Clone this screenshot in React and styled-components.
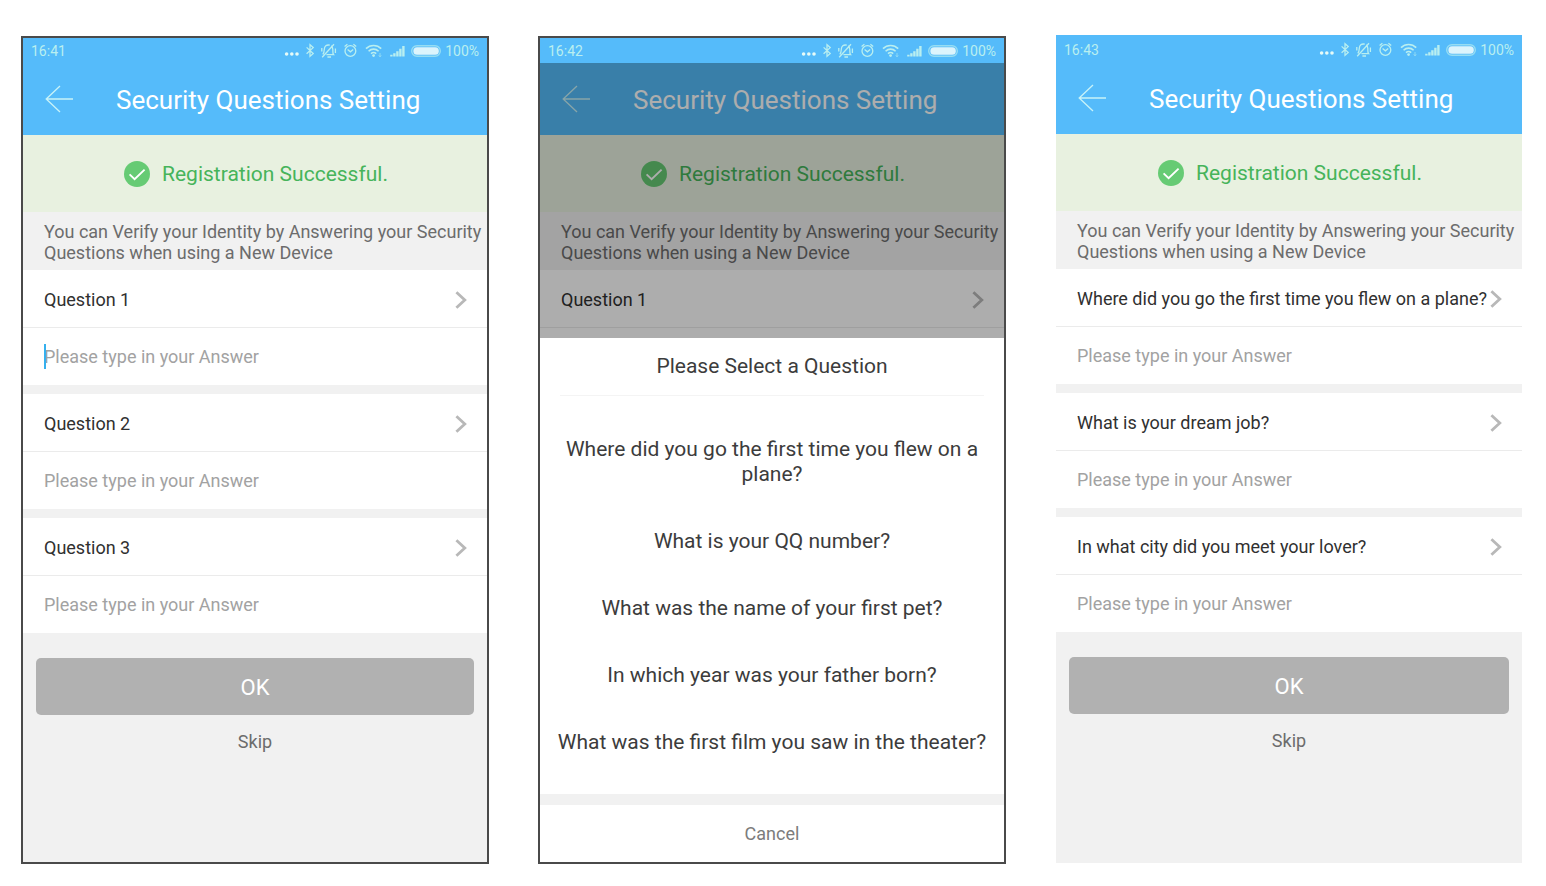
import React, { useState } from 'react'
import styled, { createGlobalStyle, css } from 'styled-components'

const questionPool = [
  'Where did you go the first time you flew on a plane?',
  'What is your QQ number?',
  'What was the name of your first pet?',
  'In which year was your father born?',
  'What was the first film you saw in the theater?',
]

const BackIcon = () => (
  <svg width="28" height="28" viewBox="0 0 28 28" fill="none" stroke="currentColor" strokeWidth="1.3">
    <path d="M15 1 L1.2 14 L15 27 M1.2 14 H28" />
  </svg>
)

const CheckIcon = () => (
  <svg width="26" height="26" viewBox="0 0 26 26" fill="none">
    <circle cx="13" cy="13" r="13" fill="#66cb74" />
    <path d="M5.6 13.4 L10.6 18.2 L20.6 8.6" stroke="#fff" strokeWidth="1.9" />
  </svg>
)

const ChevronIcon = () => (
  <svg width="12" height="18" viewBox="0 0 12 18" fill="none" stroke="#b8b8b8" strokeWidth="2.8">
    <path d="M1.4 1.2 L9.8 9 L1.4 16.8" />
  </svg>
)

const StatusIcons = () => (
  <svg width="158" height="18" viewBox="0 0 158 18" fill="none" stroke="currentColor" strokeWidth="1.3">
    {/* more */}
    <g fill="#e6fbf8" stroke="none">
      <circle cx="3.6" cy="12" r="1.8" />
      <circle cx="8.8" cy="12" r="1.8" />
      <circle cx="14" cy="12" r="1.8" />
    </g>
    {/* bluetooth */}
    <path d="M23.6 5.4 L30.2 11.6 L27 14.4 V2.8 L30.2 5.6 L23.6 11.8" />
    {/* muted bell */}
    <path d="M43.4 12.6 H50.6 C49.4 11.2 50 9.6 49.8 7.2 C49.6 5.2 49 4.4 48.2 3.8 M46.8 3.2 C43.4 2.4 41.4 4.4 41.3 7.2 C41.2 9.4 41.2 10.8 39.8 12.4 M44.4 15 H48 M39.2 15.2 L51 2.2 M38.8 6 V9.4 M52.4 6.4 V11" />
    {/* alarm */}
    <circle cx="67.4" cy="9" r="5.4" />
    <path d="M64.6 7.6 L67.4 9.8 L70.2 7.6 M61.6 4.4 L64.4 2.2 M73.2 4.4 L70.4 2.2" />
    {/* wifi */}
    <path d="M83 6.6 C87.2 2.4 94 2.4 98.2 6.6 M85.6 9.2 C88.4 6.4 92.8 6.4 95.6 9.2 M88 11.6 C89.6 10.2 91.6 10.2 93.2 11.6" strokeWidth="1.6" />
    <circle cx="90.6" cy="13.6" r="1.4" fill="currentColor" stroke="none" />
    <path d="M97 11 V14.6 M95.8 13.4 L97 14.8 L98.2 13.4" strokeWidth="0.8" opacity="0.7" />
    {/* signal */}
    <path d="M108.4 14.6 V12.8 M111.4 14.6 V11.2 M114.4 14.6 V9.2 M117.4 14.6 V6.8 M120.4 14.6 V4" strokeWidth="2.4" />
    {/* battery */}
    <rect x="128.7" y="3.7" width="28.6" height="10.6" rx="5.3" strokeWidth="1.4" opacity="0.65" />
    <rect x="130.4" y="5.2" width="25.4" height="7.6" rx="3.6" fill="#dcf4fc" stroke="none" />
  </svg>
)

const QuestionField = ({ id, question, focused }) => {
  const [answer, setAnswer] = useState('')

  return (
    <StCard>
      <StQuestion type="button">
        <span>{question}</span>
        <ChevronIcon />
      </StQuestion>
      <StAnswerRow>
        {focused && <StCaret />}
        <StAnswer
          id={id}
          aria-label={question}
          placeholder="Please type in your Answer"
          value={answer}
          onChange={(event) => setAnswer(event.target.value)}
        />
      </StAnswerRow>
    </StCard>
  )
}

const QuestionSheet = () => (
  <StOverlay>
    <StSheet>
      <StSheetTitle>Please Select a Question</StSheetTitle>
      <StOptions>
        {questionPool.map((question) => (
          <StOption key={question} type="button">
            {question}
          </StOption>
        ))}
      </StOptions>
      <StCancel type="button">Cancel</StCancel>
    </StSheet>
  </StOverlay>
)

const Phone = ({ time, framed, children }) => (
  <StPhone $framed={framed}>
    <StStatusBar>
      <StTime>{time}</StTime>
      <StatusIcons />
      <StBattery>100%</StBattery>
    </StStatusBar>
    <StHeader>
      <StBack type="button" aria-label="Back">
        <BackIcon />
      </StBack>
      <StTitle>Security Questions Setting</StTitle>
    </StHeader>
    <StBanner>
      <CheckIcon />
      Registration Successful.
    </StBanner>
    <StNotice>You can Verify your Identity by Answering your Security Questions when using a New Device</StNotice>
    {children}
  </StPhone>
)

const QuestionForm = ({ name, questions, focusFirst }) => (
  <StForm onSubmit={(event) => event.preventDefault()}>
    <StCards>
      {questions.map((question, index) => (
        <QuestionField
          key={question}
          id={`${name}-${index}`}
          question={question}
          focused={focusFirst && index === 0}
        />
      ))}
    </StCards>
    <StOk>OK</StOk>
    <StSkip type="button">Skip</StSkip>
  </StForm>
)

const App = () => {
  return (
    <>
      <GlobalStyle />
      <StPage>
        <Phone time="16:41" framed>
          <QuestionForm name="empty" questions={['Question 1', 'Question 2', 'Question 3']} focusFirst />
        </Phone>
        <Phone time="16:42" framed>
          <StCard>
            <StQuestion type="button">
              <span>Question 1</span>
              <ChevronIcon />
            </StQuestion>
            <StAnswerRow />
          </StCard>
          <QuestionSheet />
        </Phone>
        <Phone time="16:43">
          <QuestionForm
            name="chosen"
            questions={[questionPool[0], 'What is your dream job?', 'In what city did you meet your lover?']}
          />
        </Phone>
      </StPage>
    </>
  )
}

export default App

const GlobalStyle = createGlobalStyle`
  * {
    box-sizing: border-box;
  }
  body {
    margin: 0;
    background-color: #fff;
    font-family: Roboto, 'Liberation Sans', sans-serif;
  }
  button, input {
    font-family: inherit;
    border: none;
    background: none;
    padding: 0;
  }
  button {
    cursor: pointer;
  }
  svg {
    flex-shrink: 0;
  }
`

const StPage = styled.main`
  min-height: 100vh;
  display: grid;
  grid-template-columns: repeat(3, minmax(0, 1fr));
  gap: 49px;
  padding: 35px 23px 22px 21px;
`

const StPhone = styled.section`
  position: relative;
  display: flex;
  flex-direction: column;
  background-color: #f1f1f1;
  ${({ $framed }) =>
    $framed
      ? css`
          margin-top: 1px;
          border: 2px solid #4a4a4a;
        `
      : css`
          margin: 0 1px 1px;
          border-top: 2px solid #55bbfa;
        `}
`

const StStatusBar = styled.div`
  display: flex;
  align-items: center;
  height: 25px;
  padding: 0 8px;
  background-color: #55bbfa;
  color: #b9eff0;
  font-size: 14px;
`

const StTime = styled.span`
  flex: 1;
`

const StBattery = styled.span`
  margin-left: 4px;
`

const StHeader = styled.header`
  display: flex;
  align-items: center;
  height: 72px;
  padding: 0 22px;
  background-color: #55bbfa;
  color: #fff;
`

const StBack = styled.button`
  display: flex;
  color: #c8f3f8;
`

const StTitle = styled.h1`
  flex: 1;
  margin: 0 0 0 43px;
  padding-top: 2px;
  font-size: 26px;
  font-weight: 400;
  white-space: nowrap;
`

const StBanner = styled.div`
  display: flex;
  align-items: center;
  justify-content: center;
  gap: 12px;
  height: 77px;
  padding-left: 2px;
  background-color: #e8f1e0;
  color: #46b45a;
  font-size: 21px;
`

const StNotice = styled.p`
  margin: 0;
  padding: 9px 0 7px 21px;
  color: #6c6c6c;
  font-size: 18px;
  line-height: 21px;
`

const StForm = styled.form`
  display: flex;
  flex-direction: column;
`

const StCards = styled.div`
  display: flex;
  flex-direction: column;
  gap: 9px;
`

const StCard = styled.div`
  background-color: #fff;
`

const StQuestion = styled.button`
  display: flex;
  align-items: center;
  justify-content: space-between;
  width: 100%;
  height: 58px;
  padding: 2px 20px 0 21px;
  border-bottom: 1px solid #ebebeb;
  color: #303030;
  font-size: 18px;
  white-space: nowrap;
`

const StAnswerRow = styled.div`
  position: relative;
  display: flex;
  height: 57px;
  padding: 0 21px;
`

const StCaret = styled.i`
  position: absolute;
  top: 16px;
  left: 21px;
  width: 2px;
  height: 25px;
  background-color: #35b0ee;
`

const StAnswer = styled.input`
  flex: 1;
  min-width: 0;
  color: #303030;
  font-size: 18px;
  &::placeholder {
    color: #a2a2a2;
    opacity: 1;
  }
`

const StOk = styled.button`
  height: 57px;
  margin: 25px 13px 0;
  padding-top: 2px;
  border-radius: 5px;
  background-color: #b1b1b1;
  color: #fff;
  font-size: 22px;
`

const StSkip = styled.button`
  align-self: center;
  margin-top: 16px;
  color: #6c6c6c;
  font-size: 18px;
  line-height: 22px;
`

const StOverlay = styled.div`
  position: absolute;
  inset: 25px 0 0;
  display: flex;
  flex-direction: column;
  justify-content: flex-end;
  background-color: rgba(0, 0, 0, 0.32);
`

const StSheet = styled.div`
  background-color: #fff;
  color: #3c3c3c;
`

const StSheetTitle = styled.h2`
  margin: 0 20px;
  border-bottom: 1px solid #f4f4f4;
  font-size: 21px;
  font-weight: 400;
  line-height: 57px;
  text-align: center;
`

const StOptions = styled.div`
  display: flex;
  flex-direction: column;
  padding: 20px 15px 18px;
  border-bottom: 11px solid #f1f1f1;
`

const StOption = styled.button`
  padding: 21px 0;
  color: #3c3c3c;
  font-size: 21px;
  line-height: 25px;
`

const StCancel = styled.button`
  width: 100%;
  height: 57px;
  color: #7c7c7c;
  font-size: 18px;
`
